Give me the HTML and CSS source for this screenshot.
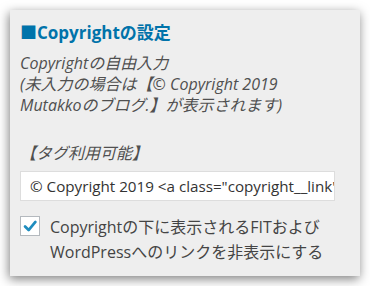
FILE: index.html
```html
<!DOCTYPE html>
<html lang="ja">
<head>
<meta charset="utf-8">
<link rel="stylesheet" href="styles.css">
</head>
<body>
<div class="panel">
  <h3 class="title">■Copyrightの設定</h3>
  <p class="desc">Copyrightの自由入力<br>(未入力の場合は【© Copyright 2019<br>Mutakkoのブログ.】が表示されます)</p>
  <p class="tag">【タグ利用可能】</p>
  <div class="input">© Copyright 2019 &lt;a class="copyright__link" href="/"&gt;</div>
  <label class="check">
    <span class="box"><svg viewBox="0 0 20 20" width="20" height="20"><path d="M4.5 10.5 L8.5 14.5 L16 5.5" fill="none" stroke="#1e8cbe" stroke-width="3" stroke-linecap="round" stroke-linejoin="round"/></svg></span>
    <span class="label">Copyrightの下に表示されるFITおよびWordPressへのリンクを非表示にする</span>
  </label>
</div>
</body>
</html>
```
FILE: styles.css
```css
html, body { margin: 0; padding: 0; background: #fff; }
body {
  font-family: "Open Sans", "Noto Sans CJK JP", sans-serif;
  width: 370px; height: 286px; overflow: hidden;
}
.panel {
  margin: 10px;
  width: 350px;
  height: 266px;
  box-sizing: border-box;
  background: #eeeeee;
  box-shadow: -1px 3px 10px rgba(0,0,0,0.5);
  padding: 11px 10px 0 10px;
}
.title {
  margin: 0;
  font-size: 17px;
  line-height: 24px;
  font-weight: bold;
  color: #0073aa;
}
.desc {
  margin: 8px 0 0;
  font-size: 16px;
  line-height: 21px;
  font-style: italic;
  color: #505050;
}
.tag {
  margin: 27px 0 0;
  font-size: 16px;
  line-height: 21px;
  font-style: italic;
  color: #505050;
}
.input {
  margin-top: 7px;
  height: 30px;
  width: 315px;
  box-sizing: border-box;
  background: #fff;
  border: 1px solid #ddd;
  padding: 0 9px;
  font-size: 15.2px;
  line-height: 28px;
  color: #333;
  white-space: nowrap;
  overflow: hidden;
}
.check {
  display: flex;
  gap: 10px;
  margin-top: 13px;
  align-items: flex-start;
}
.box {
  flex: none;
  width: 20px;
  height: 20px;
  box-sizing: border-box;
  margin-top: 2px;
  background: #fff;
  border: 1px solid #b4b9be;
  display: flex;
  align-items: center;
  justify-content: center;
}
.box svg { display: block; }
.label {
  font-size: 16px;
  line-height: 25px;
  margin-top: 1px;
  color: #444;
}
```
